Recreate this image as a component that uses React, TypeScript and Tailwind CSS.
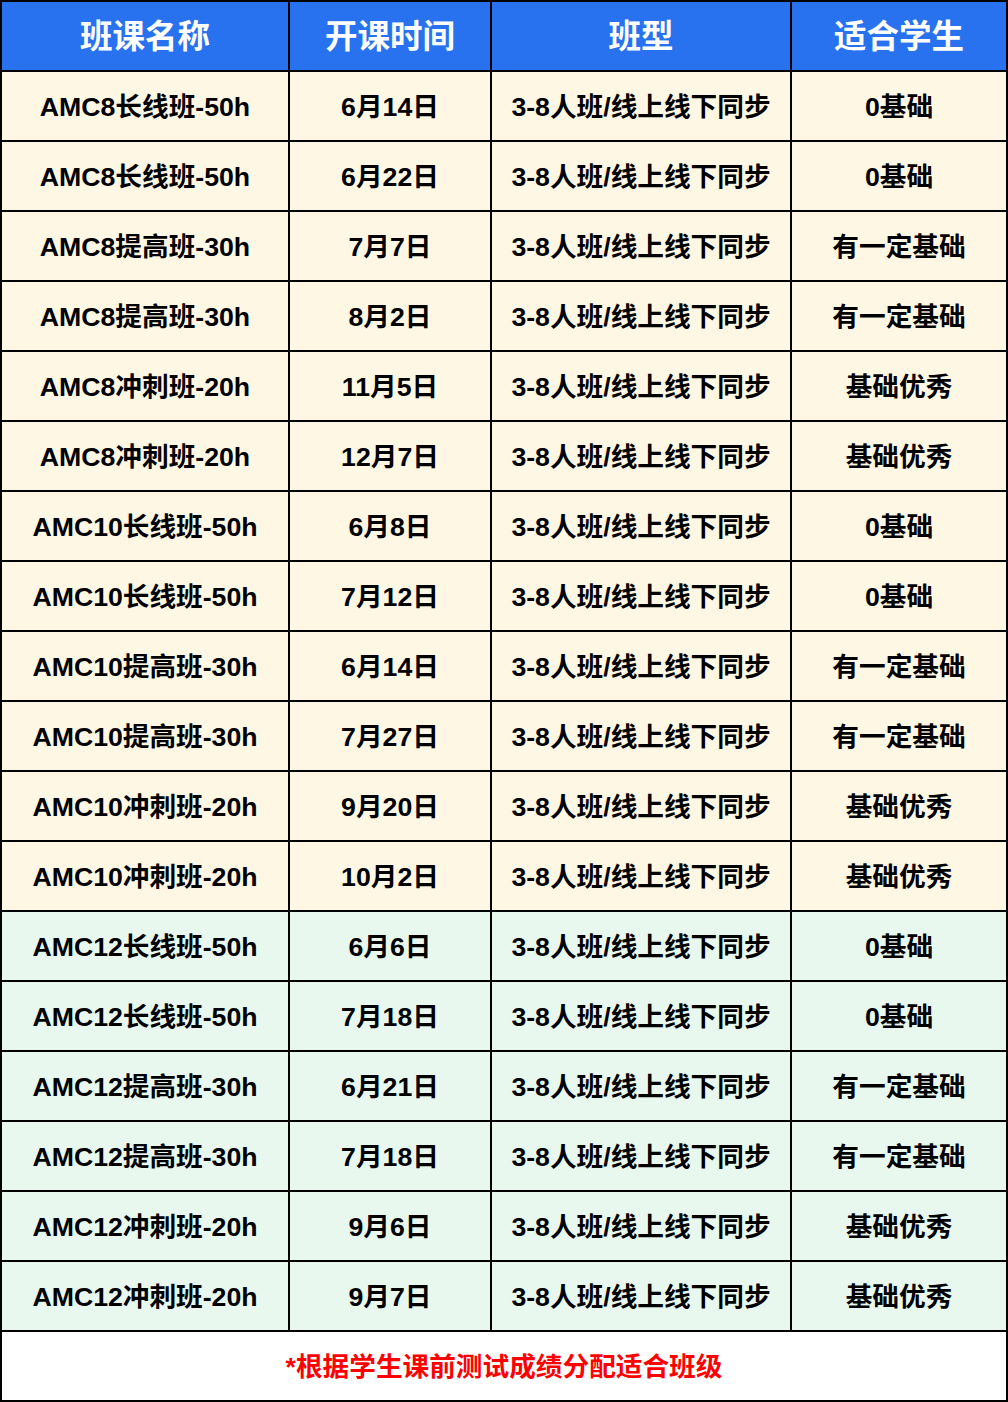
import React from "react";

type Row = { name: string; date: string; level: string; green?: boolean };

const rows: Row[] = [
  { name: "AMC8长线班-50h", date: "6月14日", level: "0基础" },
  { name: "AMC8长线班-50h", date: "6月22日", level: "0基础" },
  { name: "AMC8提高班-30h", date: "7月7日", level: "有一定基础" },
  { name: "AMC8提高班-30h", date: "8月2日", level: "有一定基础" },
  { name: "AMC8冲刺班-20h", date: "11月5日", level: "基础优秀" },
  { name: "AMC8冲刺班-20h", date: "12月7日", level: "基础优秀" },
  { name: "AMC10长线班-50h", date: "6月8日", level: "0基础" },
  { name: "AMC10长线班-50h", date: "7月12日", level: "0基础" },
  { name: "AMC10提高班-30h", date: "6月14日", level: "有一定基础" },
  { name: "AMC10提高班-30h", date: "7月27日", level: "有一定基础" },
  { name: "AMC10冲刺班-20h", date: "9月20日", level: "基础优秀" },
  { name: "AMC10冲刺班-20h", date: "10月2日", level: "基础优秀" },
  { name: "AMC12长线班-50h", date: "6月6日", level: "0基础", green: true },
  { name: "AMC12长线班-50h", date: "7月18日", level: "0基础", green: true },
  { name: "AMC12提高班-30h", date: "6月21日", level: "有一定基础", green: true },
  { name: "AMC12提高班-30h", date: "7月18日", level: "有一定基础", green: true },
  { name: "AMC12冲刺班-20h", date: "9月6日", level: "基础优秀", green: true },
  { name: "AMC12冲刺班-20h", date: "9月7日", level: "基础优秀", green: true },
];

const headers = ["班课名称", "开课时间", "班型", "适合学生"];

const font = { fontFamily: '"Liberation Sans", "Noto Sans CJK SC", sans-serif' };

export default function App() {
  return (
    <div
      className="w-[1008px] grid grid-cols-[286px_200px_298px_214px] auto-rows-[68px] gap-[2px] p-[2px] bg-black font-bold"
      style={font}
    >
      {headers.map((h) => (
        <div key={h} className="bg-[#2972ef] text-white text-[32.5px] pt-[3px] flex items-center justify-center">
          {h}
        </div>
      ))}
      {rows.map((r, i) => {
        const bg = r.green ? "bg-[#e8f8ee]" : "bg-[#fef7e4]";
        return (
          <React.Fragment key={i}>
            <div className={`${bg} text-[26.67px] text-black pt-[2px] flex items-center justify-center`}>{r.name}</div>
            <div className={`${bg} text-[26.67px] text-black pt-[2px] flex items-center justify-center`}>{r.date}</div>
            <div className={`${bg} text-[26.67px] text-black pt-[2px] flex items-center justify-center`}>3-8人班/线上线下同步</div>
            <div className={`${bg} text-[26.67px] text-black pt-[2px] flex items-center justify-center`}>{r.level}</div>
          </React.Fragment>
        );
      })}
      <div className="col-span-4 bg-white text-[#ff0000] text-[26.67px] pt-[2px] flex items-center justify-center">
        *根据学生课前测试成绩分配适合班级
      </div>
    </div>
  );
}
